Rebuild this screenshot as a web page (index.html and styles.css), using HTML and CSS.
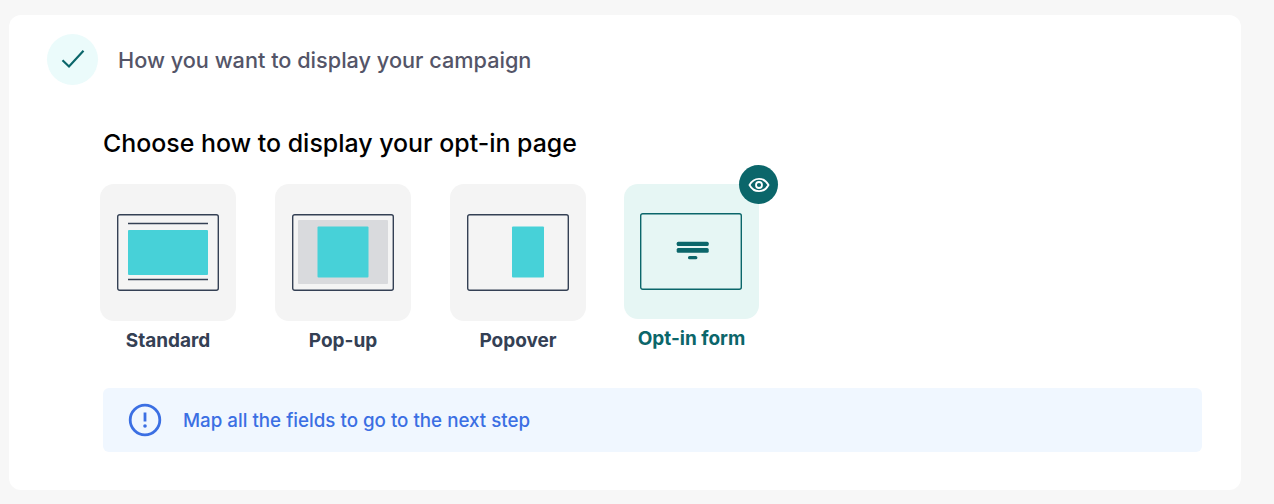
FILE: index.html
```html
<!DOCTYPE html>
<html lang="en">
<head>
<meta charset="utf-8">
<title>Campaign display</title>
<link rel="stylesheet" href="styles.css">
</head>
<body>
<main class="card">
  <header class="step">
    <span class="step-icon">
      <svg width="24" height="24" viewBox="0 0 24 24" fill="none"><path d="M1.500 13.200 8 19.500 22.500 3.800" stroke="#0b666a" stroke-width="2.200"/></svg>
    </span>
    <h2 class="step-title">How you want to display your campaign</h2>
  </header>
  <section class="content">
    <h1 class="heading">Choose how to display your opt-in page</h1>
    <div class="options">
      <div class="option">
        <div class="tile">
          <svg class="thumb" width="102" height="77" viewBox="0 0 102 77" fill="none">
            <rect x=".7" y=".7" width="100.600" height="75.600" rx="2" stroke="#344054" stroke-width="1.400"/>
            <path d="M11 9.500h80M11 65.500h80" stroke="#344054" stroke-width="1.400"/>
            <rect x="11" y="16" width="80" height="45" rx="1" fill="#47d1d8"/>
          </svg>
        </div>
        <span class="label">Standard</span>
      </div>
      <div class="option">
        <div class="tile">
          <svg class="thumb" width="102" height="77" viewBox="0 0 102 77" fill="none">
            <rect x=".7" y=".7" width="100.600" height="75.600" rx="2" stroke="#344054" stroke-width="1.400"/>
            <rect x="6" y="6" width="90" height="64" rx="1" fill="#d9dadd"/>
            <rect x="25.500" y="12.500" width="51" height="51" rx="1" fill="#47d1d8"/>
          </svg>
        </div>
        <span class="label">Pop-up</span>
      </div>
      <div class="option">
        <div class="tile">
          <svg class="thumb" width="102" height="77" viewBox="0 0 102 77" fill="none">
            <rect x=".7" y=".7" width="100.600" height="75.600" rx="2" stroke="#344054" stroke-width="1.400"/>
            <rect x="45" y="12.500" width="32" height="51" rx="1" fill="#47d1d8"/>
          </svg>
        </div>
        <span class="label">Popover</span>
      </div>
      <div class="option option-active">
        <div class="tile">
          <svg class="thumb" width="102" height="77" viewBox="0 0 102 77" fill="none">
            <rect x=".7" y=".7" width="100.600" height="75.600" rx="2" stroke="#0b666a" stroke-width="1.400"/>
            <rect x="36.700" y="28.700" width="32" height="4.400" rx="1.500" fill="#0b666a"/>
            <rect x="36.700" y="35" width="32" height="4.700" rx="1.500" fill="#0b666a"/>
            <rect x="48" y="43" width="9.400" height="3.300" rx="1.600" fill="#0b666a"/>
          </svg>
          <span class="badge">
            <svg width="22" height="22" viewBox="0 0 22 22" fill="none">
              <path d="M1.500 11C3.700 6.900 7 4.800 11 4.800S18.300 6.900 20.500 11C18.300 15.100 15 17.200 11 17.200S3.700 15.100 1.500 11Z" stroke="#fff" stroke-width="1.800"/>
              <circle cx="11" cy="11" r="3" stroke="#fff" stroke-width="1.800"/>
            </svg>
          </span>
        </div>
        <span class="label">Opt-in form</span>
      </div>
    </div>
    <div class="notice">
      <svg class="notice-icon" width="34" height="34" viewBox="0 0 34 34" fill="none">
        <circle cx="17" cy="17" r="14.800" stroke="#3b6fe3" stroke-width="2.800"/>
        <path d="M17 9.500v9" stroke="#3b6fe3" stroke-width="2.800"/>
        <circle cx="17" cy="23" r="1.800" fill="#3b6fe3"/>
      </svg>
      <span class="notice-text">Map all the fields to go to the next step</span>
    </div>
  </section>
</main>
</body>
</html>
```
FILE: styles.css
```css
* {
  box-sizing: border-box;
}

html,
body {
  margin: 0;
  height: 100%;
}

body {
  background: #f7f7f7;
  padding: 15px 33px 14px 9px;
  font-family: Inter, "Liberation Sans", sans-serif;
  overflow: hidden;
}

.card {
  height: 475px;
  background: #fff;
  border-radius: 12px;
  padding: 18px 39px 0 38px;
}

.step {
  display: flex;
  align-items: center;
  gap: 20px;
  height: 52px;
}

.step-icon {
  width: 51px;
  height: 51px;
  border-radius: 50%;
  background: #ebfbfb;
  display: flex;
  align-items: center;
  justify-content: center;
}

.step-title {
  margin: 2px 0 0;
  font-size: 21.7px;
  font-weight: 550;
  color: #545568;
}

.content {
  padding-left: 53px;
}

.heading {
  margin: 43px 0 0 3px;
  font-size: 24.9px;
  line-height: 30px;
  font-weight: 550;
  color: #000;
}

.options {
  display: flex;
  gap: 39px;
  margin-top: 26px;
}

.option {
  width: 136px;
  display: flex;
  flex-direction: column;
  align-items: center;
  gap: 9px;
}

.option-active {
  width: 135px;
  margin-left: -1px;
}

.tile {
  position: relative;
  width: 100%;
  height: 137px;
  border-radius: 14px;
  background: #f4f4f4;
  display: flex;
  align-items: center;
  justify-content: center;
}

.option-active .tile {
  height: 135px;
  background: #e6f6f4;
}

.thumb {
  display: block;
}

.option-active .thumb {
  margin-right: 2px;
}

.badge {
  position: absolute;
  top: -19px;
  right: -19px;
  width: 39px;
  height: 39px;
  border-radius: 50%;
  background: #0b666a;
  display: flex;
  align-items: center;
  justify-content: center;
}

.label {
  font-size: 19px;
  line-height: 22px;
  font-weight: 650;
  color: #344054;
}

.option-active .label {
  color: #0b666a;
}

.notice {
  display: flex;
  align-items: center;
  gap: 21px;
  height: 64px;
  margin: 36px 0 0 3px;
  padding-left: 25px;
  border-radius: 6px;
  background: #f0f7ff;
}

.notice-text {
  font-size: 18.75px;
  font-weight: 550;
  color: #3b6fe3;
}
```
